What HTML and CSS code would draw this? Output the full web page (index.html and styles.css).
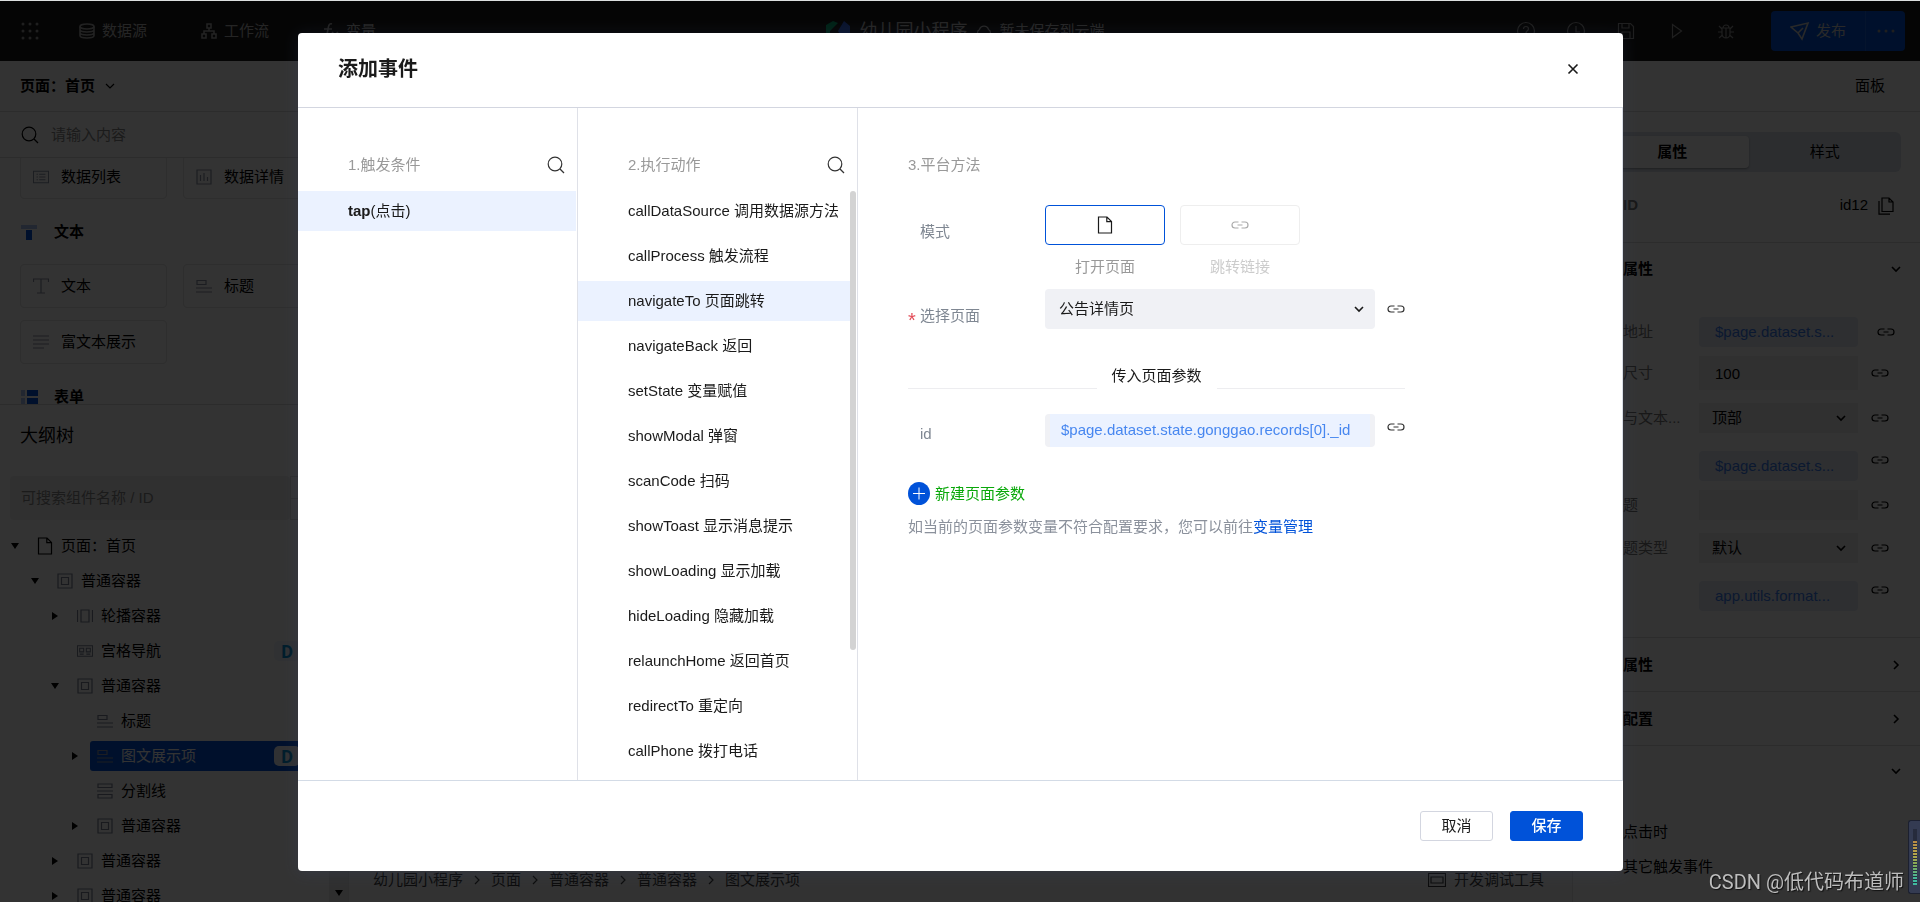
FILE: index.html
```html
<!DOCTYPE html>
<html lang="zh-CN">
<head>
<meta charset="utf-8">
<title>添加事件</title>
<link rel="stylesheet" href="styles.css">
</head>
<body>
<svg class="sprite" aria-hidden="true">
  <symbol id="i-search" viewBox="0 0 18 18"><circle cx="8" cy="8" r="6.8"/><path d="M13 13l4 4"/></symbol>
  <symbol id="i-down" viewBox="0 0 10 10"><path d="M1 3l4 4 4-4"/></symbol>
  <symbol id="i-right" viewBox="0 0 10 10"><path d="M3 1l4 4-4 4"/></symbol>
  <symbol id="i-link" viewBox="0 0 18 18"><path d="M7.500 6H4a3 3 0 0 0 0 6h3.500M10.500 6H14a3 3 0 0 1 0 6h-3.500M6.500 9h5"/></symbol>
  <symbol id="i-file" viewBox="0 0 16 18"><path d="M1.500 1h8.500l4.500 4.500V17h-13zM9.800 1v4.700h4.700"/></symbol>
  <symbol id="i-box" viewBox="0 0 16 16"><path d="M1 1h14v14H1zM4.500 4.500h7v7h-7z"/></symbol>
  <symbol id="i-swiper" viewBox="0 0 16 16"><path d="M4 2h8v12H4zM.5 2v12M15.500 2v12"/></symbol>
  <symbol id="i-grid" viewBox="0 0 18 16"><path d="M.5 2h17v12H.5zM3 5h4.500v4H3zM10.500 5H15v4h-4.500zM3 11.500h4.500M10.500 11.500H15"/></symbol>
  <symbol id="i-title" viewBox="0 0 16 16"><path d="M1 2.500h9v4H1zM0 10h16M0 14h16"/></symbol>
  <symbol id="i-split" viewBox="0 0 16 16"><path d="M1 1h14v3.500H1zM1 11.500h14V15H1zM0 8h16"/></symbol>
  <symbol id="i-text" viewBox="0 0 16 16"><path d="M.5 4V1h15v3M8 1v14M4 15h8"/></symbol>
  <symbol id="i-rich" viewBox="0 0 16 16"><path d="M0 2h16M0 6h16M0 10h16M0 14h11"/></symbol>
  <symbol id="i-list" viewBox="0 0 18 16"><path d="M.5 1.500h17v13H.5zM4 5h1.500M7 5h7M4 8h1.500M7 8h7M4 11h1.500M7 11h7"/></symbol>
  <symbol id="i-chart" viewBox="0 0 16 16"><path d="M1 1h14v14H1zM4.500 6v6M8 4v8M11.500 8v4"/></symbol>
  <symbol id="i-screen" viewBox="0 0 18 16"><path d="M.5 1.500h17v13H.5zM3 5h12v6H3z"/></symbol>
  <symbol id="i-copy" viewBox="0 0 16 18"><path d="M4 1h7l4 4v9.500H4zM11 1v4h4M1 4v13.200h11"/></symbol>
</svg>

<div class="app">
  <header class="topbar">
    <nav class="topnav">
      <button class="nav-apps" aria-label="应用"><svg class="dots" width="18" height="18" viewBox="0 0 18 18"><circle cx="2" cy="2" r="1.500"/><circle cx="9" cy="2" r="1.500"/><circle cx="16" cy="2" r="1.500"/><circle cx="2" cy="9" r="1.500"/><circle cx="9" cy="9" r="1.500"/><circle cx="16" cy="9" r="1.500"/><circle cx="2" cy="16" r="1.500"/><circle cx="9" cy="16" r="1.500"/><circle cx="16" cy="16" r="1.500"/></svg></button>
      <button class="nav-item"><svg class="ico thick" width="16" height="16" viewBox="0 0 16 16"><ellipse cx="8" cy="3.500" rx="7" ry="2.500"/><path d="M1 3.500v9c0 3.300 14 3.300 14 0v-9M1 6.500c0 3.300 14 3.300 14 0M1 9.500c0 3.300 14 3.300 14 0"/></svg>数据源</button>
      <button class="nav-item"><svg class="ico thick" width="16" height="16" viewBox="0 0 16 16"><path d="M6 1h4v4H6zM1 11h4v4H1zM11 11h4v4h-4zM8 5v3M3 11V8h10v3"/></svg>工作流</button>
      <button class="nav-item"><svg class="ico thick" width="16" height="16" viewBox="0 0 16 16"><path d="M9 1C6 0 5.500 3 5 6s-1 9-4 8M1 6h8M9 9l6 6M15 9l-6 6"/></svg>变量</button>
    </nav>
    <div class="project">
      <svg class="logo" width="24" height="24" viewBox="0 0 24 24"><path fill="#00a870" d="M0 6l7-4 5 2-8 8v8l-4-4z"/><path fill="#2f62e0" d="M12 12l6-10 6 5v10l-6 5z"/></svg>
      <strong class="project-name">幼儿园小程序</strong>
      <svg class="ico" width="16" height="16" viewBox="0 0 16 16"><path d="M4 13a3.500 3.500 0 0 1-.5-6.500 4.700 4.700 0 0 1 9 0A3.500 3.500 0 0 1 12 13z"/></svg>
      <span>暂未保存到云端</span>
    </div>
    <div class="tools">
      <button aria-label="帮助"><svg class="ico" width="20" height="20" viewBox="0 0 20 20"><circle cx="10" cy="10" r="8.500"/><path d="M7.500 8c0-3.500 5-3.200 5 0 0 1.800-2.500 1.800-2.500 4M10 14v1.500"/></svg></button>
      <button aria-label="历史"><svg class="ico" width="20" height="20" viewBox="0 0 20 20"><circle cx="10" cy="10" r="8.500"/><path d="M10 5v6h4"/></svg></button>
      <button aria-label="保存"><svg class="ico" width="20" height="20" viewBox="0 0 20 20"><path d="M2.500 2.500h12l3 3v12h-15zM6 2.500V7h7V2.500M6 17v-6h8v6"/></svg></button>
      <button aria-label="预览"><svg class="ico" width="20" height="20" viewBox="0 0 20 20"><path d="M6.500 3.500l9 6.500-9 6.500z"/></svg></button>
      <button aria-label="调试"><svg class="ico" width="20" height="20" viewBox="0 0 20 20"><path d="M6 7h8v6a4 4 0 0 1-8 0zM7 7a3 3 0 0 1 6 0M10 7v10M6 11H2M14 11h4M6 8L3 5M14 8l3-3M6.500 14L3 17M13.500 14l3.500 3"/></svg></button>
      <div class="publish">
        <button class="publish-main"><svg class="ico thick" width="20" height="20" viewBox="0 0 20 20"><path d="M1 6l17-4-6 16-4-6zM8 12l5-5"/></svg>发布</button>
        <button class="publish-more" aria-label="更多"><svg class="dots" width="18" height="4" viewBox="0 0 18 4"><circle cx="2" cy="2" r="1.500"/><circle cx="9" cy="2" r="1.500"/><circle cx="16" cy="2" r="1.500"/></svg></button>
      </div>
    </div>
  </header>

  <div class="workspace">
    <aside class="left">
      <div class="page-pick"><strong>页面：首页</strong><svg class="ico" width="10" height="10"><use href="#i-down"/></svg></div>
      <label class="find"><svg class="ico" width="18" height="18"><use href="#i-search"/></svg><input type="text" placeholder="请输入内容" aria-label="搜索组件"></label>
      <div class="library">
        <div class="cards first">
          <button class="card"><svg class="ico" width="16" height="16"><use href="#i-list"/></svg>数据列表</button>
          <button class="card"><svg class="ico" width="16" height="16"><use href="#i-chart"/></svg>数据详情</button>
        </div>
        <h3 class="group"><svg width="18" height="18" viewBox="0 0 18 18"><path fill="#a9c2f5" d="M1 2h16v4H1z"/><path fill="#0052d9" d="M6 7h6v10H6z"/></svg>文本</h3>
        <div class="cards">
          <button class="card"><svg class="ico" width="16" height="16"><use href="#i-text"/></svg>文本</button>
          <button class="card"><svg class="ico" width="16" height="16"><use href="#i-title"/></svg>标题</button>
          <button class="card"><svg class="ico" width="16" height="16"><use href="#i-rich"/></svg>富文本展示</button>
        </div>
        <h3 class="group"><svg width="18" height="18" viewBox="0 0 18 18"><path fill="#a9c2f5" d="M1 2h4v6H1zM1 10h4v6H1z"/><path fill="#0052d9" d="M7 2h11v6H7zM7 10h11v6H7z"/></svg>表单</h3>
      </div>
      <div class="outline">
        <div class="outline-main">
          <h2 class="outline-title">大纲树</h2>
          <div class="outline-find"><input type="text" placeholder="可搜索组件名称 / ID" aria-label="搜索组件名称"><span class="steps"><i></i><i></i></span></div>
          <ul class="tree">
            <li class="lv0"><b class="open"></b><span class="node dark"><svg class="ico" width="16" height="18"><use href="#i-file"/></svg>页面：首页</span></li>
            <li class="lv1"><b class="open"></b><span class="node"><svg class="ico" width="16" height="16"><use href="#i-box"/></svg>普通容器</span></li>
            <li class="lv2"><b class="shut"></b><span class="node"><svg class="ico" width="16" height="16"><use href="#i-swiper"/></svg>轮播容器</span></li>
            <li class="lv2"><b></b><span class="node"><svg class="ico" width="16" height="16"><use href="#i-grid"/></svg>宫格导航<em class="tag">D</em></span></li>
            <li class="lv2"><b class="open"></b><span class="node"><svg class="ico" width="16" height="16"><use href="#i-box"/></svg>普通容器</span></li>
            <li class="lv3"><b></b><span class="node"><svg class="ico" width="16" height="16"><use href="#i-title"/></svg>标题</span></li>
            <li class="lv3"><b class="shut"></b><span class="node current"><svg class="ico" width="16" height="16"><use href="#i-title"/></svg>图文展示项<em class="tag">D</em></span></li>
            <li class="lv3"><b></b><span class="node"><svg class="ico" width="16" height="16"><use href="#i-split"/></svg>分割线</span></li>
            <li class="lv3"><b class="shut"></b><span class="node"><svg class="ico" width="16" height="16"><use href="#i-box"/></svg>普通容器</span></li>
            <li class="lv2"><b class="shut"></b><span class="node"><svg class="ico" width="16" height="16"><use href="#i-box"/></svg>普通容器</span></li>
            <li class="lv2"><b class="shut"></b><span class="node"><svg class="ico" width="16" height="16"><use href="#i-box"/></svg>普通容器</span></li>
          </ul>
        </div>
        <div class="gutter"><b class="open"></b></div>
      </div>
    </aside>

    <main class="stage">
      <div class="canvas"></div>
      <footer class="crumbs">
        <span>幼儿园小程序</span><svg class="ico" width="10" height="10"><use href="#i-right"/></svg>
        <span>页面</span><svg class="ico" width="10" height="10"><use href="#i-right"/></svg>
        <span>普通容器</span><svg class="ico" width="10" height="10"><use href="#i-right"/></svg>
        <span>普通容器</span><svg class="ico" width="10" height="10"><use href="#i-right"/></svg>
        <span>图文展示项</span>
        <button class="devtools"><svg class="ico" width="18" height="16"><use href="#i-screen"/></svg>开发调试工具</button>
      </footer>
    </main>

    <aside class="right">
      <div class="right-head"><span>面板</span></div>
      <div class="tabs"><button class="tab on">属性</button><button class="tab">样式</button></div>
      <div class="ident"><strong>组件ID</strong><span>id12</span><svg class="ico" width="16" height="18"><use href="#i-copy"/></svg></div>
      <section class="props">
        <h3 class="fold">基础属性<svg class="ico thick" width="10" height="10"><use href="#i-down"/></svg></h3>
        <div class="prop chip"><span class="name">图片地址</span><button class="bind">$page.dataset.s...</button><svg class="ico far" width="18" height="18"><use href="#i-link"/></svg></div>
        <div class="prop text tall"><label class="name" for="p-size">图片尺寸</label><input id="p-size" type="text" value="100"><svg class="ico" width="18" height="18"><use href="#i-link"/></svg></div>
        <div class="prop pick"><label class="name" for="p-pos">图片与文本...</label><span class="pick-box"><select id="p-pos"><option>顶部</option></select><svg class="ico thick" width="10" height="10"><use href="#i-down"/></svg></span><svg class="ico" width="18" height="18"><use href="#i-link"/></svg></div>
        <div class="prop chip"><span class="name">标题</span><button class="bind">$page.dataset.s...</button><svg class="ico" width="18" height="18"><use href="#i-link"/></svg></div>
        <div class="prop text"><label class="name" for="p-sub">副标题</label><input id="p-sub" type="text"><svg class="ico" width="18" height="18"><use href="#i-link"/></svg></div>
        <div class="prop pick"><label class="name" for="p-type">副标题类型</label><span class="pick-box"><select id="p-type"><option>默认</option></select><svg class="ico thick" width="10" height="10"><use href="#i-down"/></svg></span><svg class="ico" width="18" height="18"><use href="#i-link"/></svg></div>
        <div class="prop chip"><span class="name">内容</span><button class="bind">app.utils.format...</button><svg class="ico" width="18" height="18"><use href="#i-link"/></svg></div>
      </section>
      <section class="more"><h3 class="fold">高级属性<svg class="ico thick" width="10" height="10"><use href="#i-right"/></svg></h3></section>
      <section class="more"><h3 class="fold">数据配置<svg class="ico thick" width="10" height="10"><use href="#i-right"/></svg></h3></section>
      <section class="more"><h3 class="fold short">事件<svg class="ico thick" width="10" height="10"><use href="#i-down"/></svg></h3>
        <ul class="events"><li>点击时</li><li>其它触发事件</li></ul>
      </section>
    </aside>
  </div>
</div>

<div class="mask">
  <div class="dialog" role="dialog" aria-labelledby="dlg-title">
    <header class="dialog-head">
      <h1 id="dlg-title">添加事件</h1>
      <button class="close" aria-label="关闭"><svg class="ico thick" width="12" height="12" viewBox="0 0 12 12"><path d="M1.500 1.500l9 9M10.500 1.500l-9 9"/></svg></button>
    </header>
    <div class="dialog-body">
      <section class="col">
        <div class="col-head"><span>1.触发条件</span><button aria-label="搜索触发条件"><svg class="ico" width="18" height="18"><use href="#i-search"/></svg></button></div>
        <ul class="options one"><li><button class="on"><strong>tap</strong>(点击)</button></li></ul>
      </section>
      <section class="col">
        <div class="col-head"><span>2.执行动作</span><button aria-label="搜索执行动作"><svg class="ico" width="18" height="18"><use href="#i-search"/></svg></button></div>
        <div class="scroller">
          <ul class="options">
            <li><button>callDataSource 调用数据源方法</button></li>
            <li><button>callProcess 触发流程</button></li>
            <li><button class="on">navigateTo 页面跳转</button></li>
            <li><button>navigateBack 返回</button></li>
            <li><button>setState 变量赋值</button></li>
            <li><button>showModal 弹窗</button></li>
            <li><button>scanCode 扫码</button></li>
            <li><button>showToast 显示消息提示</button></li>
            <li><button>showLoading 显示加载</button></li>
            <li><button>hideLoading 隐藏加载</button></li>
            <li><button>relaunchHome 返回首页</button></li>
            <li><button>redirectTo 重定向</button></li>
            <li><button>callPhone 拨打电话</button></li>
          </ul>
          <div class="rail"><div class="thumb"></div></div>
        </div>
      </section>
      <section class="detail">
        <div class="detail-title">3.平台方法</div>
        <div class="row">
          <span class="label">模式</span>
          <div class="modes">
            <div class="mode on"><button aria-label="打开页面"><svg class="ico" width="16" height="18"><use href="#i-file"/></svg></button><span>打开页面</span></div>
            <div class="mode off"><button disabled aria-label="跳转链接"><svg class="ico" width="18" height="18"><use href="#i-link"/></svg></button><span>跳转链接</span></div>
          </div>
        </div>
        <div class="row">
          <label class="label must" for="f-page">选择页面</label>
          <span class="select"><select id="f-page"><option>公告详情页</option></select><svg class="ico thick" width="10" height="10"><use href="#i-down"/></svg></span>
          <button class="link" aria-label="绑定"><svg class="ico" width="18" height="18"><use href="#i-link"/></svg></button>
        </div>
        <div class="divider"><span>传入页面参数</span></div>
        <div class="row param">
          <span class="label">id</span>
          <div class="expr"><button>$page.dataset.state.gonggao.records[0]._id</button></div>
          <button class="link" aria-label="绑定"><svg class="ico" width="18" height="18"><use href="#i-link"/></svg></button>
        </div>
        <button class="add"><svg width="22" height="23" viewBox="0 0 22 23"><ellipse cx="11" cy="11.500" rx="11" ry="11.500" fill="#0052d9"/><path d="M5 11.500h12M11 5.500v12" stroke="#fff"/></svg>新建页面参数</button>
        <p class="hint">如当前的页面参数变量不符合配置要求，您可以前往<a href="#">变量管理</a></p>
      </section>
    </div>
    <footer class="dialog-foot"><button class="btn">取消</button><button class="btn primary">保存</button></footer>
  </div>
</div>

<div class="watermark">CSDN @低代码布道师</div>
<div class="meter"><div class="meter-bars"></div></div>
</body>
</html>
```

FILE: styles.css
```css
* { box-sizing: border-box; }
html, body { height: 100%; }
body {
  margin: 0;
  border-top: 1px solid #dcdfdf;
  overflow: hidden;
  font: 15px/24px "Liberation Sans", "Noto Sans CJK SC", sans-serif;
  color: #000;
}
button, input, select { font: inherit; color: inherit; }
button { background: none; border: 0; padding: 0; cursor: pointer; }
input, select { border: 0; border-radius: 0; min-width: 0; outline: 0; appearance: none; }
ul { list-style: none; margin: 0; padding: 0; }
h1, h2, h3, p { margin: 0; }
svg { flex: none; display: block; }
.sprite { position: absolute; width: 0; height: 0; }
.ico { fill: none; stroke: currentColor; stroke-width: 1.2; }
.ico.thick { stroke-width: 1.6; }
.dots { fill: currentColor; }

/* ---------- application shell ---------- */
.app { height: 100%; display: flex; flex-direction: column; background: #fff; }
.topbar {
  flex: none; height: 60px; display: flex; align-items: center; justify-content: space-between;
  background: #1a1a1a; color: #bbb; position: relative;
}
.topnav { display: flex; align-items: center; padding-left: 21px; }
.nav-apps { width: 18px; margin-right: 40px; color: #999; }
.nav-item { display: flex; align-items: center; gap: 7px; margin-right: 54px; }
.nav-item .ico { color: #aaa; }
.project { display: flex; align-items: center; gap: 8px; position: absolute; left: 43%; }
.logo { margin-right: 2px; }
.project-name { font-size: 18px; font-weight: 400; }
.tools { display: flex; align-items: center; gap: 30px; padding-right: 15px; color: #999; }
.publish { display: flex; height: 40px; margin-left: 5px; background: #0052d9; border-radius: 4px; color: #ccc; }
.publish-main { width: 94px; display: flex; align-items: center; justify-content: center; gap: 6px; }
.publish-more { width: 40px; display: grid; place-items: center; border-left: 1px solid #1d67e0; color: #999; }

.workspace { flex: 1; min-height: 0; display: flex; }
.left { flex: none; width: 349px; display: flex; flex-direction: column; border-right: 1px solid #e4e4e4; }
.page-pick { flex: none; height: 51px; padding: 0 20px; display: flex; align-items: center; gap: 10px; border-bottom: 1px solid #dadada; }
.find { flex: none; height: 46px; padding: 0 21px; display: flex; align-items: center; gap: 12px; border-bottom: 1px solid #dadada; }
.find input { flex: 1; padding: 0; background: none; }
input::placeholder { color: #888; opacity: 1; }
.library { flex: none; height: 247px; overflow: hidden; padding: 0 18px 0 20px; border-bottom: 1px solid #dadada; }
.cards { display: grid; grid-template-columns: 1fr 1fr; gap: 12px 16px; }
.cards.first { margin-top: -3px; }
.card { height: 44px; padding: 0 12px; display: flex; align-items: center; gap: 12px; border: 1px solid #e3e3e3; border-radius: 4px; }
.card .ico { color: #8b93a6; }
.group { height: 65px; display: flex; align-items: center; gap: 16px; font-size: 15px; }

.outline { flex: 1; min-height: 0; display: flex; overflow: hidden; }
.outline-main { flex: 1; min-width: 0; padding-top: 18px; }
.outline-title { padding-left: 20px; margin-bottom: 27px; font-size: 18px; line-height: 26px; font-weight: 400; }
.outline-find { display: flex; margin: 0 10px 8px; height: 44px; }
.outline-find input { flex: 1; padding: 0 11px; background: #f0f0f0; border-radius: 4px; }
.steps { width: 29px; display: grid; border: 1px solid #ddd; }
.steps i + i { border-top: 1px solid #ddd; }
.tree li { height: 35px; display: flex; align-items: center; gap: 8px; padding-left: 8px; }
.tree .lv1 { padding-left: 28px; }
.tree .lv2 { padding-left: 48px; }
.tree .lv3 { padding-left: 68px; }
.tree b { width: 14px; display: grid; place-items: center; }
.open::before { content: ""; border: 4px solid transparent; border-top: 6px solid #000; border-bottom: 0; }
.shut::before { content: ""; border: 4px solid transparent; border-left: 6px solid #000; border-right: 0; }
.node { flex: 1; height: 30px; margin-right: 4px; padding: 0 25px 0 7px; display: flex; align-items: center; gap: 8px; border-radius: 3px; }
.node .ico { color: #7d8496; }
.node.dark .ico { color: #000; }
.node.current { background: #0052d9; color: #fff; }
.node.current .ico { color: #8b93a6; }
.tag { margin-left: auto; width: 26px; height: 20px; border-radius: 5px; background: #eef3ff; color: #0091d5; font: 700 18px/22px Roboto, sans-serif; text-align: center; }
.gutter { flex: none; width: 19px; display: flex; align-items: flex-end; justify-content: center; padding-bottom: 6px; background: #ebebeb; }
.gutter b { display: grid; }

.stage { flex: 1; min-width: 0; display: flex; flex-direction: column; background: #fafafa; }
.canvas { flex: 1; background: #f3f3f3; }
.crumbs { height: 42px; display: flex; align-items: center; gap: 9px; padding: 0 28px 2px 24px; color: #3a3a3a; }
.devtools { margin-left: auto; display: flex; align-items: center; gap: 8px; }

.right { flex: none; width: 348px; border-left: 1px solid #e4e4e4; }
.right-head { height: 51px; display: flex; align-items: center; justify-content: flex-end; padding-right: 35px; border-bottom: 1px solid #dadada; }
.tabs { display: flex; height: 40px; margin: 20px 19px; padding: 4px 0 4px 4px; background: #d9dfe8; border-radius: 6px; }
.tab { flex: 1; border-radius: 4px; }
.tab.on { background: #fff; font-weight: 700; box-shadow: 0 1px 2px rgba(0, 0, 0, .3); }
.ident { height: 50px; display: flex; align-items: flex-start; gap: 10px; padding: 1px 26px 0 20px; }
.ident strong { flex: 1; color: #777; }
.ident .ico { margin-top: 4px; }
.props { border-top: 1px solid #dadada; padding-bottom: 17px; }
.fold { height: 53px; padding: 0 19px 0 20px; display: flex; align-items: center; justify-content: space-between; font-size: 15px; }
.fold.short { height: 50px; }
.props .fold { height: 51px; margin-bottom: 23px; }
.prop { display: flex; align-items: center; height: 30px; padding-left: 20px; }
.prop.tall { height: 34px; }
.prop.chip { margin-bottom: 9px; }
.prop.text { margin-bottom: 13px; }
.prop.pick { margin-bottom: 18px; }
.prop .name { flex: none; width: 106px; color: #777; white-space: nowrap; overflow: hidden; }
.prop > .ico { margin-left: 13px; }
.prop.chip > .ico { align-self: flex-start; }
.prop.chip > .ico.far { margin-left: 19px; align-self: center; }
.prop input, .pick-box, .bind { width: 159px; height: 100%; background: #efefef; }
.prop input { padding: 0 16px; }
.bind { padding-left: 16px; text-align: left; background: #e3e9f6; border-radius: 4px; color: #3b7cf0; }
.pick-box { position: relative; }
.pick-box select { width: 100%; height: 100%; padding: 0 13px; background: none; }
.pick-box .ico { position: absolute; right: 12px; top: 10px; pointer-events: none; }
.more { border-top: 1px solid #dadada; }
.events { padding: 18px 20px 0 50px; }
.events li { height: 35px; line-height: 35px; }

/* ---------- dialog ---------- */
.mask { position: fixed; inset: 1px 0 0; display: flex; padding: 32px 297px 31px 298px; background: rgba(0, 0, 0, .8); }
.dialog { flex: 1; min-width: 0; display: flex; flex-direction: column; background: #fff; border-radius: 4px; color: #1a1a1a; box-shadow: 0 2px 16px rgba(60, 70, 110, .25); }
.dialog-head { flex: none; height: 75px; padding: 0 42px 2px 40px; display: flex; align-items: center; justify-content: space-between; border-bottom: 1px solid #d3d6e0; }
.dialog-head h1 { font-size: 20px; line-height: 28px; }
.close { width: 16px; height: 16px; display: grid; place-items: center; }
.dialog-body { flex: 1; min-height: 0; display: flex; border-right: 1px solid #d9dde6; }
.col { flex: none; width: 280px; padding-top: 45px; display: flex; flex-direction: column; border-right: 1px solid #dfe1e8; }
.col-head { display: flex; align-items: center; justify-content: space-between; height: 24px; margin-bottom: 14px; padding: 0 12px 0 50px; color: #999; }
.col-head button { color: #333; }
.scroller { flex: 1; min-height: 0; display: flex; overflow: hidden; }
.options { flex: 1; }
.options.one { flex: none; margin-right: 1px; }
.options button { width: 100%; height: 40px; margin-bottom: 5px; padding: 0 0 0 50px; text-align: left; display: block; white-space: nowrap; }
.options .on { background: #ebf2ff; }
.rail { flex: none; width: 7px; padding-right: 1px; }
.thumb { height: 78%; background: #d3d3d3; border-radius: 3px; }

.detail { flex: 1; padding: 45px 50px 0; }
.detail-title { margin-bottom: 28px; color: #999; }
.row { display: flex; align-items: flex-start; max-width: 497px; margin-bottom: 10px; }
.label { flex: none; width: 137px; padding: 15px 0 0 12px; color: #7f8792; }
.must { position: relative; }
.must::before { content: "*"; position: absolute; left: 0; top: 19px; color: #e34d59; font-size: 20px; }
.modes { display: flex; gap: 15px; }
.mode { width: 120px; text-align: center; color: #999; }
.mode button { width: 100%; height: 40px; margin-bottom: 10px; display: grid; place-items: center; border: 1px solid #eee; border-radius: 4px; }
.mode span { display: block; }
.mode.on button { border-color: #0052d9; color: #1a1a1a; }
.mode.off { color: #ccc; }
.mode.off button { color: #aaa; }
.select { flex: 1; height: 40px; position: relative; }
.select select { width: 100%; height: 100%; padding: 0 14px; background: #f0f1f5; border-radius: 4px; }
.select .ico { position: absolute; right: 11px; top: 15px; pointer-events: none; }
.link { width: 18px; height: 40px; margin-left: 12px; display: grid; place-items: center; color: #333; }
.divider { max-width: 497px; display: flex; align-items: flex-end; gap: 15px; margin: 35px 0 25px; height: 25px; }
.divider::before, .divider::after { content: ""; flex: 1; height: 1px; background: #ededf0; }
.divider span { align-self: flex-start; }
.param { margin-bottom: 35px; height: 33px; }
.param .label { padding-top: 8px; }
.param .link { height: 26px; }
.expr { flex: 1; height: 33px; padding: 0 5px; background: #f0f1f5; border-radius: 4px; }
.expr button { width: 100%; height: 100%; padding: 0 0 2px 11px; text-align: left; background: #ebf2ff; color: #4787f0; white-space: nowrap; }
.add { display: flex; align-items: center; gap: 5px; height: 23px; color: #0aa80a; }
.hint { margin-top: 10px; color: #8b919c; white-space: nowrap; }
.hint a { color: #0052d9; text-decoration: none; }
.dialog-foot { flex: none; height: 91px; padding: 0 40px; display: flex; align-items: center; justify-content: flex-end; gap: 17px; border-top: 1px solid #d3dbe6; }
.btn { width: 73px; height: 30px; border: 1px solid #d3d6e0; border-radius: 3px; }
.btn.primary { background: #0052d9; border-color: #0052d9; color: #fff; font-weight: 500; }

/* ---------- corner overlays ---------- */
.watermark { position: fixed; right: 16px; bottom: 6px; font: 20px/28px Roboto, "Noto Sans CJK SC", sans-serif; color: #bdbdbd; text-shadow: 1px 1px 1px #111; white-space: nowrap; }
.meter { position: fixed; right: 0; bottom: 8px; width: 12px; height: 74px; padding: 8px 3px 8px 4px; background: #343b52; border: 1px solid #1c2030; border-right: 0; border-radius: 3px 0 0 3px; }
.meter-bars { height: 100%; background: repeating-linear-gradient(transparent 0 2px, #262b3c 2px 3px), linear-gradient(#262b3c 20%, #b98a45 22%, #b5a54a 45%, #7fa95a 65%, #3fb9a0 90%); }
```
